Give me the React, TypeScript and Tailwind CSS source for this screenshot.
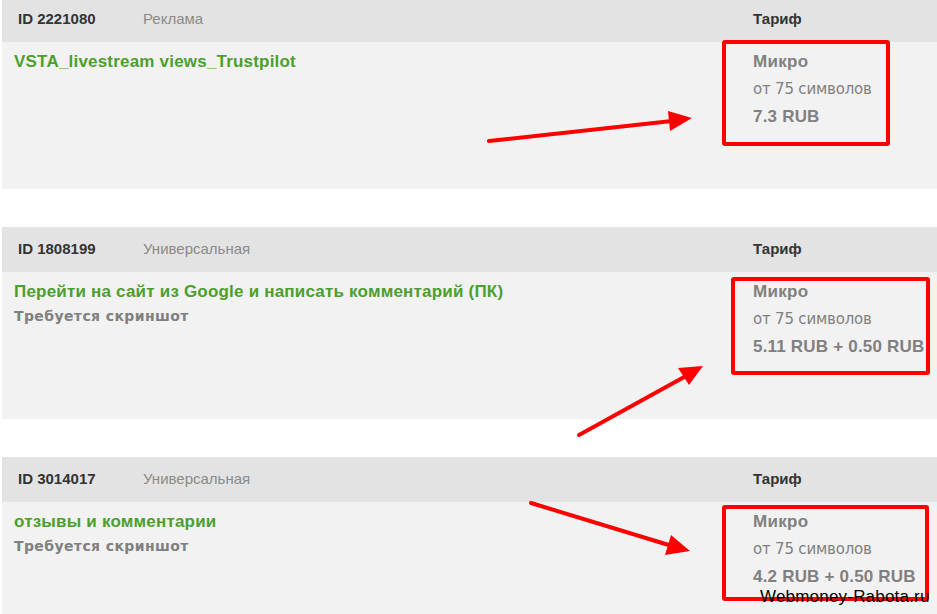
type Task = {
  id: string;
  category: string;
  title: string;
  note?: string;
  price: string;
};

const tasks: Task[] = [
  { id: "2221080", category: "Реклама", title: "VSTA_livestream views_Trustpilot", price: "7.3 RUB" },
  {
    id: "1808199",
    category: "Универсальная",
    title: "Перейти на сайт из Google и написать комментарий (ПК)",
    note: "Требуется скриншот",
    price: "5.11 RUB + 0.50 RUB",
  },
  {
    id: "3014017",
    category: "Универсальная",
    title: "отзывы и комментарии",
    note: "Требуется скриншот",
    price: "4.2 RUB + 0.50 RUB",
  },
];

function TaskRow({ task, first }: { task: Task; first?: boolean }) {
  return (
    <div className={first ? "ml-[2px] -mt-[3px]" : "ml-[2px] mt-[38px]"}>
      <div className="flex items-center h-[45px] pb-[1px] bg-[#e3e3e3] text-[15px]">
        <div className="w-[141px] pl-[16px] font-bold text-[#333]">ID {task.id}</div>
        <div className="flex-1 text-[#8a8a8a]">{task.category}</div>
        <div className="w-[184px] font-bold text-[#333]">Тариф</div>
      </div>
      <div className="flex h-[147px] bg-[#f2f2f2]">
        <div className="flex-1 pl-[12px] pt-[8px]">
          <div className="text-[17px] leading-[24px] font-bold tracking-[0.2px] text-[#4c9f2c]">{task.title}</div>
          {task.note && (
            <div className="text-[14px] leading-[24px] font-bold tracking-[0.4px] text-[#808080] font-[family-name:'DejaVu_Sans',sans-serif]">
              {task.note}
            </div>
          )}
        </div>
        <div className="w-[184px] pt-[8px] text-[#808080]">
          <div className="text-[17px] leading-[24px] font-bold tracking-[0.3px]">Микро</div>
          <div className="mt-[3px] text-[15px] leading-[24px] font-[family-name:'DejaVu_Sans',sans-serif] tracking-[-0.2px]">
            от 75 символов
          </div>
          <div className="mt-[4px] text-[17px] leading-[24px] font-bold tracking-[0.2px]">{task.price}</div>
        </div>
      </div>
    </div>
  );
}

function Annotations() {
  return (
    <svg className="absolute inset-0 pointer-events-none" width="937" height="614" viewBox="0 0 937 614">
      <g fill="none" stroke="#ff0000" strokeWidth="4" strokeLinejoin="round">
        <rect x="724" y="42" width="164" height="102" rx="1" />
        <rect x="733" y="279" width="195" height="94" rx="1" />
        <rect x="724" y="507" width="203" height="92" rx="1" />
      </g>
      <g stroke="#ff0000" strokeWidth="4" strokeLinecap="round">
        <line x1="489" y1="141" x2="672" y2="121" />
        <line x1="579" y1="435" x2="686" y2="376" />
        <line x1="531" y1="503" x2="672" y2="546" />
      </g>
      <g fill="#ff0000">
        <polygon points="692,118 668,111 670,131" />
        <polygon points="703,366 678,368 689,385" />
        <polygon points="690,551 671,535 665,555" />
      </g>
    </svg>
  );
}

export default function App() {
  return (
    <div className="relative w-[937px] h-[614px] overflow-hidden bg-white font-[family-name:'Liberation_Sans',Arial,sans-serif]">
      {tasks.map((t, i) => (
        <TaskRow key={t.id} task={t} first={i === 0} />
      ))}
      <Annotations />
      <div className="absolute left-[760px] top-[585px] text-[17px] leading-[24px] tracking-[0.2px] text-black">
        Webmoney-Rabota.ru
      </div>
    </div>
  );
}
